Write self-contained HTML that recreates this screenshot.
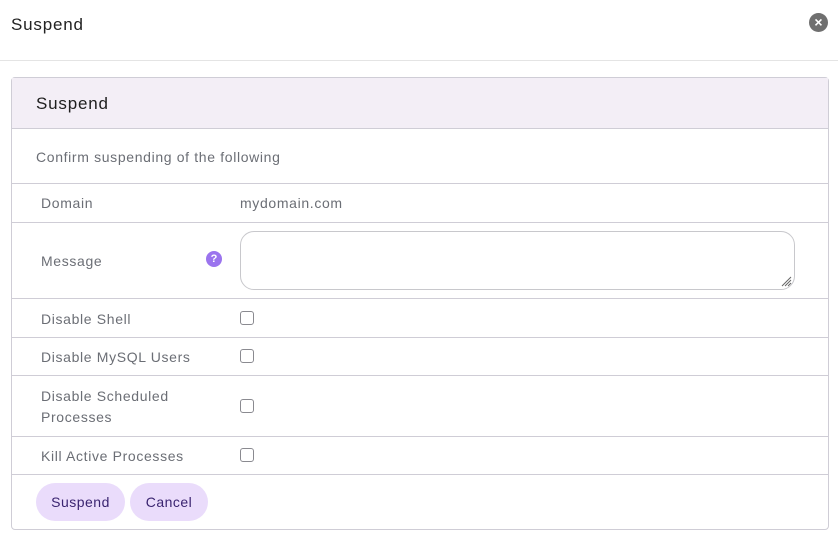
<!DOCTYPE html>
<html><head><style>
*{margin:0;padding:0;box-sizing:border-box}
body{width:838px;height:543px;background:#fff;font-family:"Liberation Sans",sans-serif;position:relative;overflow:hidden}
.a{position:absolute}
.t{font-size:14px;color:#6b6e75;letter-spacing:0.65px}
.l{position:absolute;left:12px;width:816px;height:1px;background:#cfcdd6}
.cb{position:absolute;left:240px;width:14px;height:14px;border:1px solid #8a8a90;border-radius:3px;background:#fff}
.btn{position:absolute;top:483px;height:38px;border-radius:19px;background:#eadcfb;color:#3a2470;font-size:14px;text-align:center;line-height:39px;letter-spacing:0.5px}
</style></head><body>
<div class="a" style="left:11px;top:15px;font-size:17px;color:#222;letter-spacing:0.8px">Suspend</div>
<div class="a" style="left:809px;top:13px;width:19px;height:19px;border-radius:50%;background:#6f6f6f;color:#fff;font-size:14px;font-weight:bold;text-align:center;line-height:19px">×</div>
<div class="a" style="left:0;top:60px;width:838px;height:1px;background:#e4e4e4"></div>
<div class="a" style="left:11px;top:77px;width:818px;height:453px;border:1px solid #cfcdd6;border-radius:4px"></div>
<div class="a" style="left:12px;top:78px;width:816px;height:50px;background:#f3eef6"></div>
<div class="a" style="left:36px;top:94px;font-size:17px;color:#1e1e1e;letter-spacing:0.8px">Suspend</div>
<div class="l" style="top:128px"></div>
<div class="a t" style="left:36px;top:149px">Confirm suspending of the following</div>
<div class="l" style="top:183px"></div>
<div class="a t" style="left:41px;top:195px">Domain</div>
<div class="a t" style="left:240px;top:195px">mydomain.com</div>
<div class="l" style="top:222px"></div>
<div class="a t" style="left:41px;top:253px">Message</div>
<div class="a" style="left:206px;top:251px;width:16px;height:16px;border-radius:50%;background:#9b74ee;color:#fff;font-size:11px;font-weight:bold;text-align:center;line-height:16px">?</div>
<div class="a" style="left:240px;top:231px;width:555px;height:59px;border:1px solid #c8c8cc;border-radius:14px"></div>
<svg class="a" style="left:780px;top:275px" width="12" height="12"><path d="M2 11L11 2M5 11L11 5M8 11L11 8" stroke="#666" stroke-width="1"/></svg>
<div class="l" style="top:298px"></div>
<div class="a t" style="left:41px;top:311px">Disable Shell</div>
<div class="cb" style="top:311px"></div>
<div class="l" style="top:337px"></div>
<div class="a t" style="left:41px;top:349px">Disable MySQL Users</div>
<div class="cb" style="top:349px"></div>
<div class="l" style="top:375px"></div>
<div class="a t" style="left:41px;top:386px;line-height:21px">Disable Scheduled<br>Processes</div>
<div class="cb" style="top:399px"></div>
<div class="l" style="top:436px"></div>
<div class="a t" style="left:41px;top:448px">Kill Active Processes</div>
<div class="cb" style="top:448px"></div>
<div class="l" style="top:474px"></div>
<div class="btn" style="left:36px;width:89px">Suspend</div>
<div class="btn" style="left:130px;width:78px">Cancel</div>
</body></html>
